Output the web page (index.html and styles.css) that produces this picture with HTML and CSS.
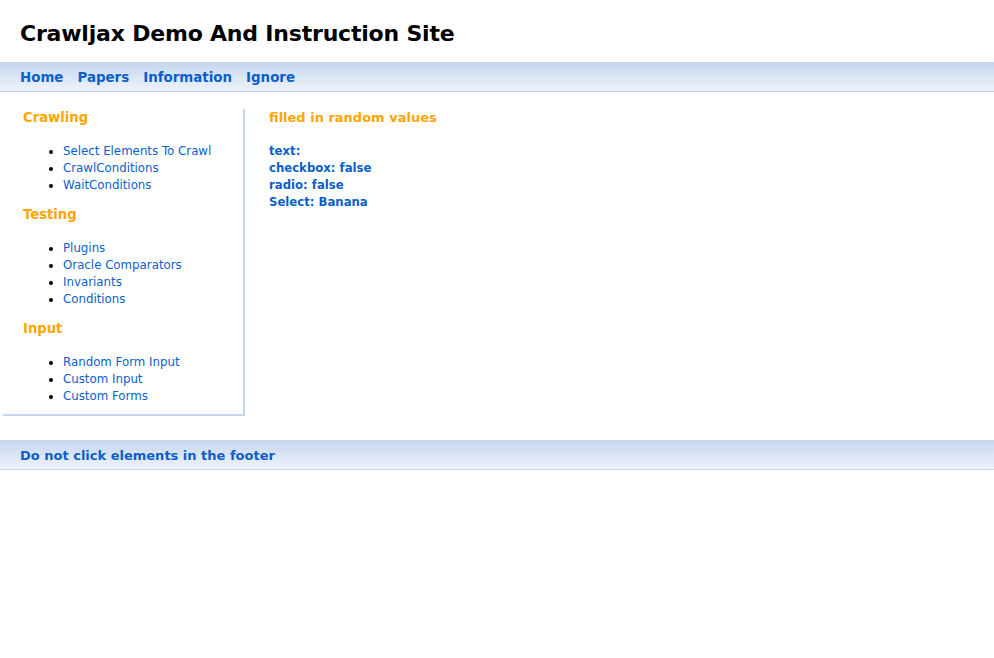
FILE: index.html
```html
<!DOCTYPE html>
<html>
<head>
<meta charset="utf-8">
<title>Crawljax Demo And Instruction Site</title>
<link rel="stylesheet" href="styles.css">
</head>
<body>
<div class="header"><h1>Crawljax Demo And Instruction Site</h1></div>
<div class="nav">
  <a href="#">Home</a>
  <a href="#">Papers</a>
  <a href="#">Information</a>
  <a href="#">Ignore</a>
</div>
<div class="content">
  <div class="sidebar">
    <h3>Crawling</h3>
    <ul>
      <li><a href="#">Select Elements To Crawl</a></li>
      <li><a href="#">CrawlConditions</a></li>
      <li><a href="#">WaitConditions</a></li>
    </ul>
    <h3>Testing</h3>
    <ul>
      <li><a href="#">Plugins</a></li>
      <li><a href="#">Oracle Comparators</a></li>
      <li><a href="#">Invariants</a></li>
      <li><a href="#">Conditions</a></li>
    </ul>
    <h3>Input</h3>
    <ul class="last">
      <li><a href="#">Random Form Input</a></li>
      <li><a href="#">Custom Input</a></li>
      <li><a href="#">Custom Forms</a></li>
    </ul>
  </div>
  <div class="main">
    <h3>filled in random values</h3>
    <p class="values">text: <br>checkbox: false<br>radio: false<br>Select: Banana</p>
  </div>
</div>
<div class="footer"><a href="#">Do not click elements in the footer</a></div>
</body>
</html>
```
FILE: styles.css
```css
body {
  margin: 0;
  font-family: "DejaVu Sans", Verdana, sans-serif;
  background: #fff;
  color: #000;
}
a { color: #0a5fcb; text-decoration: none; }
.header { height: 58px; padding-top: 4px; display: flex; align-items: center; padding-left: 20px; }
.header h1 { margin: 0; font-size: 22px; font-weight: bold; letter-spacing: -0.2px; }
.nav {
  height: 28px;
  padding-top: 1px;
  border-bottom: 1px solid #c0d5ef;
  background: linear-gradient(#c6d6ee, #eef3fb);
  display: flex;
  align-items: center;
  gap: 14px;
  padding-left: 20px;
}
.nav a { font-weight: bold; font-size: 13.4px; }
.footer a { font-weight: bold; font-size: 13px; }
.content { display: flex; padding-top: 17px; }
.sidebar {
  margin-left: 3px;
  width: 220px;
  padding-left: 20px;
  border-right: 2px solid #c6d6ee;
  border-bottom: 2px solid #c6d6ee;
}
h3 { margin: 0 0 16px; font-size: 13.2px; line-height: 18px; color: #ffa500; }
.main h3 { font-size: 13px; }
.sidebar ul { margin: 0 0 12px; padding-left: 40px; font-size: 11.8px; line-height: 17px; }
.sidebar ul.last { margin-bottom: 9px; }
.main { padding-left: 24px; }
.values { margin: 0; font-weight: bold; font-size: 11.7px; line-height: 17px; color: #0a5fcb; }
.footer {
  margin-top: 24px;
  height: 28px;
  padding-top: 1px;
  border-bottom: 1px solid #c0d5ef;
  background: linear-gradient(#c6d6ee, #eef3fb);
  display: flex;
  align-items: center;
  padding-left: 20px;
}
```
